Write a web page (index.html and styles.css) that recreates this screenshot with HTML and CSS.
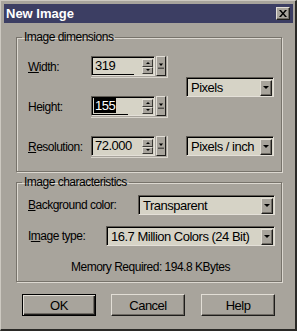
FILE: index.html
```html
<!DOCTYPE html>
<html lang="en">
<head>
  <meta charset="UTF-8" />
  <title>New Image</title>
  <link rel="stylesheet" href="styles.css">
</head>
<body>

  <div class="window">
    <div class="titlebar">
      <span class="title">New Image</span>
      <button class="close-btn" aria-label="Close">
        <svg width="8" height="7" viewBox="0 0 8 7"><path d="M0 0h2l2 2.5L6 0h2L5 3.5 8 7H6L4 4.5 2 7H0l3-3.5z" fill="#000"/></svg>
      </button>
    </div>

    <!-- Image dimensions -->
    <fieldset class="group">
      <legend>Image dimensions</legend>
      <div class="dims">
        <label class="lbl"><u>W</u>idth:</label>
        <div class="spin">
          <div class="field">
            <div class="field-row">
              <span class="value">319</span>
              <div class="arrows">
                <span class="arrow"><i class="tri up"></i></span>
                <span class="arrow"><i class="tri down"></i></span>
              </div>
            </div>
            <div class="bar" style="width: 41px"></div>
          </div>
          <span class="pop-btn"><svg width="7" height="6" viewBox="0 0 7 6"><path d="M1 0h5L3.5 3z M0 5h7v1H0z" fill="#000"/></svg></span>
        </div>
        <div class="combo units">
          <span class="combo-text">Pixels</span>
          <span class="combo-btn"><i class="tri down"></i></span>
        </div>

        <label class="lbl">Hei<u>g</u>ht:</label>
        <div class="spin">
          <div class="field">
            <div class="field-row">
              <span class="value selected">155</span>
              <div class="arrows">
                <span class="arrow"><i class="tri up"></i></span>
                <span class="arrow"><i class="tri down"></i></span>
              </div>
            </div>
            <div class="bar" style="width: 35px"></div>
          </div>
          <span class="pop-btn"><svg width="7" height="6" viewBox="0 0 7 6"><path d="M1 0h5L3.5 3z M0 5h7v1H0z" fill="#000"/></svg></span>
        </div>

        <label class="lbl"><u>R</u>esolution:</label>
        <div class="spin">
          <div class="field">
            <div class="field-row">
              <span class="value">72.000</span>
              <div class="arrows">
                <span class="arrow"><i class="tri up"></i></span>
                <span class="arrow"><i class="tri down"></i></span>
              </div>
            </div>
            <div class="bar" style="width: 0"></div>
          </div>
          <span class="pop-btn"><svg width="7" height="6" viewBox="0 0 7 6"><path d="M1 0h5L3.5 3z M0 5h7v1H0z" fill="#000"/></svg></span>
        </div>
        <div class="combo res-units">
          <span class="combo-text">Pixels / inch</span>
          <span class="combo-btn"><i class="tri down"></i></span>
        </div>
      </div>
    </fieldset>

    <!-- Image characteristics -->
    <fieldset class="group second">
      <legend>Image characteristics</legend>
      <div class="chars">
        <div class="row">
          <label class="lbl"><u>B</u>ackground color:</label>
          <div class="combo bg-combo">
            <span class="combo-text">Transparent</span>
            <span class="combo-btn"><i class="tri down"></i></span>
          </div>
        </div>
        <div class="row">
          <label class="lbl">I<u>m</u>age type:</label>
          <div class="combo type-combo">
            <span class="combo-text">16.7 Million Colors (24 Bit)</span>
            <span class="combo-btn"><i class="tri down"></i></span>
          </div>
        </div>
        <div class="memory">Memory Required: 194.8 KBytes</div>
      </div>
    </fieldset>

    <div class="buttons">
      <button class="btn default">OK</button>
      <button class="btn">Cancel</button>
      <button class="btn">Help</button>
    </div>
  </div>

</body>
</html>
```

FILE: styles.css
```css
body {
  margin: 0;
  background: #a8a49c;
  font-family: 'Liberation Sans', Arial, sans-serif;
  font-size: 12px;
  letter-spacing: -0.5px;
  color: #000;
}

.window {
  width: 297px;
  height: 331px;
  box-sizing: border-box;
  background: #a8a49c;
  border-style: solid;
  border-width: 1px 2px 2px 1px;
  border-color: #cdc9c1 #2a2926 #2a2926 #cdc9c1;
  padding: 3px 2px 0 3px;
}

.titlebar {
  height: 19px;
  background: #3c3e63;
  display: flex;
  align-items: center;
  justify-content: space-between;
  padding: 0 3px 0 2px;
}

.title {
  color: #fff;
  font-weight: bold;
  font-size: 13px;
  letter-spacing: 0;
}

.close-btn {
  width: 14px;
  height: 13px;
  padding: 0;
  display: flex;
  align-items: center;
  justify-content: center;
  background: #a8a49c;
  border: 1px solid;
  border-color: #e2ded6 #1e1d1b #1e1d1b #e2ded6;
  box-shadow: inset -1px -1px 0 #6e6a63;
}

/* Group boxes */
.group {
  margin: 7px 0 0 12px;
  width: 266px;
  box-sizing: border-box;
  padding: 0;
  border: 1px solid #77736b;
  box-shadow: 1px 1px 0 #dcd8d0, inset 1px 1px 0 #dcd8d0;
}

.group.second {
  margin-top: 3px;
}

.group legend {
  margin-left: 5px;
  padding: 0 2px;
  line-height: 14px;
}

.dims {
  display: grid;
  grid-template-columns: 63px 77px 106px;
  grid-template-rows: 22px 22px 22px;
  row-gap: 18px;
  padding: 12px 0 13px 11px;
}

.lbl {
  align-self: center;
  white-space: nowrap;
}

/* Spin edit with slider */
.spin {
  display: flex;
  width: 77px;
  height: 22px;
  box-sizing: border-box;
  padding: 0 1px 1px 0;
  border-right: 1px solid #d9d5cd;
  border-bottom: 1px solid #d9d5cd;
}

.field {
  width: 65px;
  height: 20px;
  box-sizing: border-box;
  background: #d6d3c6;
  border: 1px solid;
  border-color: #5f5b54 #e4e0d8 #e4e0d8 #5f5b54;
  box-shadow: inset 1px 1px 0 #000;
  padding: 1px 1px 0 1px;
  display: flex;
  flex-direction: column;
}

.field-row {
  display: flex;
  justify-content: space-between;
  height: 16px;
}

.value {
  font-size: 13px;
  line-height: 15px;
  padding: 0 1px;
  margin-left: 1px;
  align-self: flex-start;
}

.value.selected {
  background: #000;
  color: #fff;
}

.arrows {
  display: flex;
  flex-direction: column;
  width: 11px;
  margin-top: 1px;
}

.arrow {
  height: 7px;
  display: flex;
  align-items: center;
  justify-content: center;
  background: #a8a49c;
  border: 1px solid;
  border-color: #e2ded6 #3a3834 #3a3834 #e2ded6;
}

.tri {
  display: block;
  width: 0;
  height: 0;
  border-left: 2px solid transparent;
  border-right: 2px solid transparent;
}

.tri.up {
  border-bottom: 2px solid #000;
}

.tri.down {
  border-top: 2px solid #000;
}

.bar {
  height: 2px;
  margin-top: auto;
  background: #000;
}

.pop-btn {
  width: 8px;
  height: 18px;
  margin-left: 1px;
  display: flex;
  align-items: center;
  justify-content: center;
  background: #a8a49c;
  border: 1px solid;
  border-color: #e2ded6 #1e1d1b #1e1d1b #e2ded6;
}

.pop-btn svg {
  width: 6px;
}

/* Combo boxes */
.combo {
  height: 20px;
  box-sizing: border-box;
  display: flex;
  align-items: center;
  justify-content: space-between;
  background: #d6d3c6;
  border: 1px solid;
  border-color: #5f5b54 #e4e0d8 #e4e0d8 #5f5b54;
  box-shadow: inset 1px 1px 0 #000;
  padding: 1px 1px 0 4px;
}

.combo-text {
  font-size: 13px;
  white-space: nowrap;
}

.combo-btn {
  width: 10px;
  height: 14px;
  display: flex;
  align-items: center;
  justify-content: center;
  background: #a8a49c;
  border: 1px solid;
  border-color: #e2ded6 #1e1d1b #1e1d1b #e2ded6;
  box-shadow: inset -1px -1px 0 #6e6a63;
}

.combo-btn .tri {
  border-left-width: 3px;
  border-right-width: 3px;
  border-top-width: 3px;
}

.units {
  grid-column: 3;
  grid-row: 1 / span 2;
  align-self: center;
  margin-left: 18px;
  width: 88px;
}

.res-units {
  grid-column: 3;
  grid-row: 3;
  margin-left: 18px;
  width: 88px;
}

.chars {
  padding: 6px 6px 7px 11px;
}

.row {
  display: flex;
  align-items: center;
  justify-content: space-between;
}

.row + .row {
  margin-top: 11px;
}

.bg-combo {
  width: 137px;
}

.type-combo {
  width: 169px;
}

.memory {
  text-align: center;
  line-height: 14px;
  margin-top: 14px;
  padding-right: 2px;
}

/* Dialog buttons */
.buttons {
  display: flex;
  gap: 15px;
  margin: 12px 0 0 18px;
}

.btn {
  width: 74px;
  height: 22px;
  padding: 0;
  font-family: inherit;
  font-size: 13px;
  letter-spacing: -0.5px;
  color: #000;
  background: #a8a49c;
  border: 1px solid;
  border-color: #e2ded6 #1e1d1b #1e1d1b #e2ded6;
  box-shadow: inset -1px -1px 0 #6e6a63;
}

.btn.default {
  border: 1px solid #000;
  box-shadow: inset 1px 1px 0 #e2ded6, inset -1px -1px 0 #1e1d1b, inset -2px -2px 0 #6e6a63;
}

.btn + .btn + .btn {
  margin-left: 1px;
}
```
